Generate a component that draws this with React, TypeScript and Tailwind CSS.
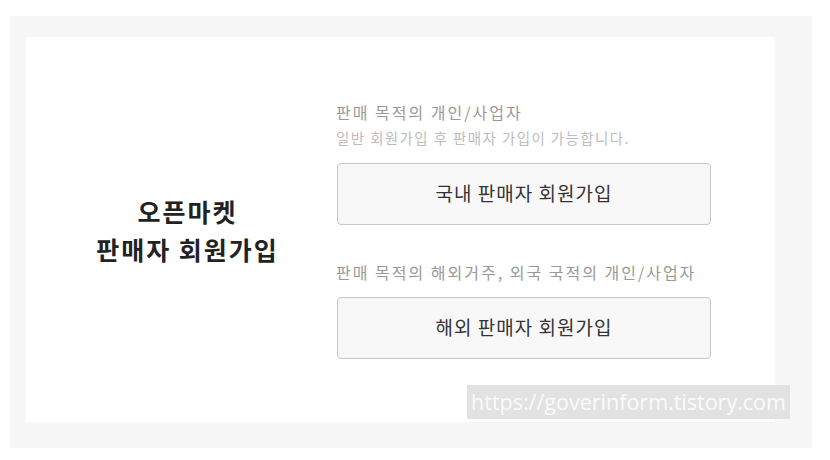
import React from 'react';

const SellerSignup: React.FC = () => {
  const options = [
    {
      label: '판매 목적의 개인/사업자',
      note: '일반 회원가입 후 판매자 가입이 가능합니다.',
      button: '국내 판매자 회원가입',
    },
    {
      label: '판매 목적의 해외거주, 외국 국적의 개인/사업자',
      note: '',
      button: '해외 판매자 회원가입',
    },
  ];

  return (
    <div className="relative w-[830px] h-[460px] bg-white font-['Noto_Sans_CJK_KR','Noto_Sans',sans-serif]">
      <div className="absolute left-[10px] top-[16px] w-[802px] h-[432px] bg-[#f7f7f7] pt-[21px] pl-[16px]">
        <div className="flex items-center w-[749px] h-[385px] bg-white">
          {/* left title */}
          <div className="w-[311px] pl-3 text-center text-[25px] tracking-[2px] font-bold leading-[38px] text-[#222]">
            <p>오픈마켓</p>
            <p>판매자 회원가입</p>
          </div>

          {/* options */}
          <div className="flex flex-col gap-[37px] pt-[1px]">
            {options.map((opt, i) => (
              <div key={i} className="flex flex-col">
                <p className="text-[16px] tracking-[2px] leading-[20px] text-[#999] -ml-px">{opt.label}</p>
                {opt.note && (
                  <p className="text-[14.5px] tracking-[1.4px] leading-[20px] mt-[6px] text-[#bdbdbd] -ml-px">{opt.note}</p>
                )}
                <button
                  type="button"
                  className="mt-[15px] w-[374px] h-[62px] border border-[#c8c8c8] rounded bg-[#f8f8f8] text-[19px] tracking-[1px] text-[#333]"
                >
                  {opt.button}
                </button>
              </div>
            ))}
          </div>
        </div>
      </div>

      {/* watermark */}
      <div className="absolute left-[467px] top-[385px] w-[323px] h-[34px] bg-[#e2e2e2] flex items-center justify-center text-[21.5px] text-[#fafafa] font-['Open_Sans',sans-serif]">
        https://goverinform.tistory.com
      </div>
    </div>
  );
};

export default SellerSignup;
